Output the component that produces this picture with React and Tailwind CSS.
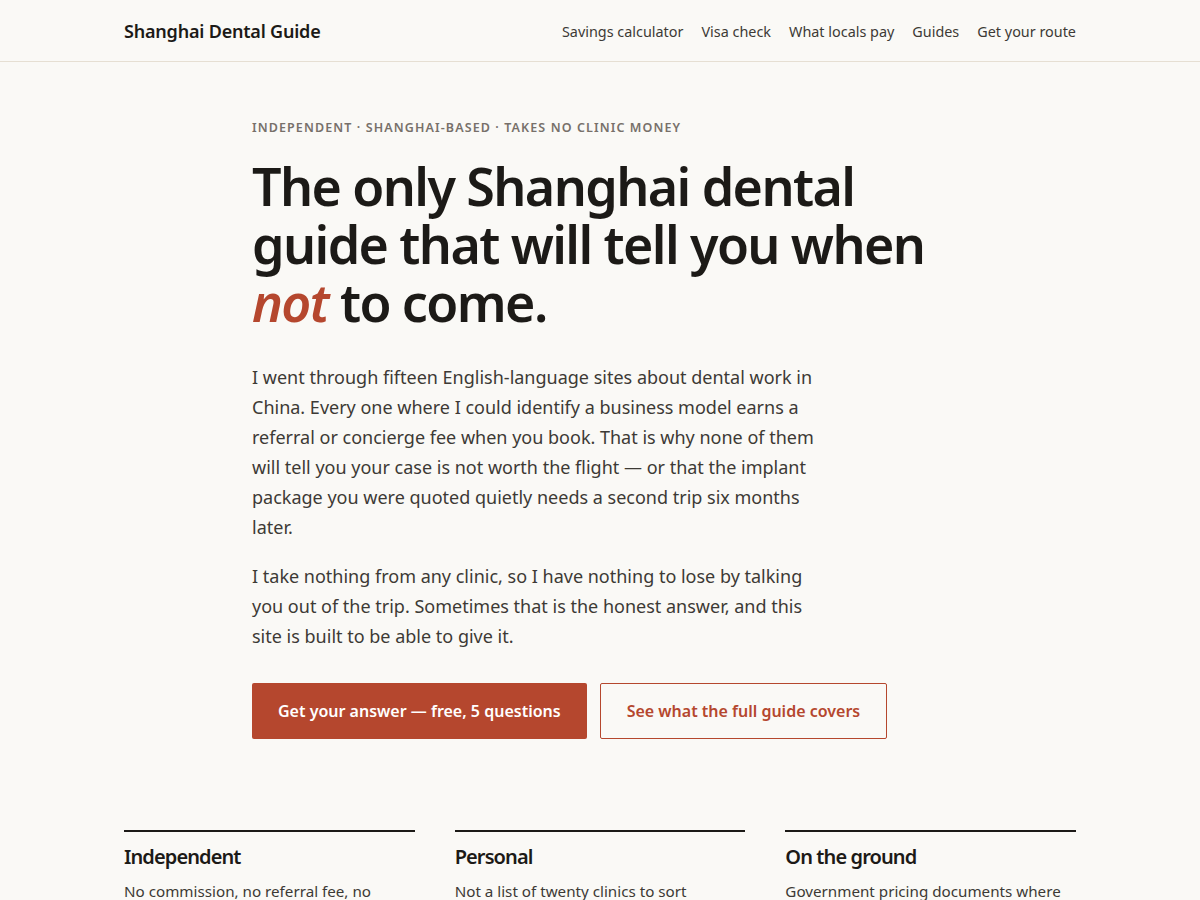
export default function App() {
  const font = { fontFamily: '"Noto Sans", "Open Sans", sans-serif' };
  return (
    <div className="min-h-[900px] bg-[#faf9f6] text-[#1c1a17]" style={font}>
      <header className="border-b border-[#e6dfd3]">
        <div className="mx-auto flex h-[61px] w-[952px] items-center justify-between pt-[2px]">
          <div className="text-[18px] font-semibold tracking-[-0.2px] text-[#1c1a17]">Shanghai Dental Guide</div>
          <nav className="flex items-center gap-[18px] text-[14.4px] text-[#3d3a35]">
            <a>Savings calculator</a>
            <a>Visa check</a>
            <a>What locals pay</a>
            <a>Guides</a>
            <a>Get your route</a>
          </nav>
        </div>
      </header>
      <main className="mx-auto w-[952px]">
        <section className="pl-[128px] pt-[57px]">
          <p className="text-[12.5px] font-semibold uppercase tracking-[1.1px] text-[#77706a]">
            Independent · Shanghai-based · Takes no clinic money
          </p>
          <h1 className="mt-[19px] max-w-[700px] text-[52px] font-semibold leading-[58px] tracking-[-1.6px] text-[#1c1a17]">
            The only Shanghai dental guide that will tell you when{" "}
            <em className="italic text-[#b5472e]">not</em> to come.
          </h1>
          <p className="mt-[31px] max-w-[570px] text-[18px] leading-[30px] text-[#3d3a35]">
            I went through fifteen English-language sites about dental work in China. Every one where I could identify a business model earns a referral or concierge fee when you book. That is why none of them will tell you your case is not worth the flight — or that the implant package you were quoted quietly needs a second trip six months later.
          </p>
          <p className="mt-[19px] max-w-[570px] text-[18px] leading-[30px] text-[#3d3a35]">
            I take nothing from any clinic, so I have nothing to lose by talking you out of the trip. Sometimes that is the honest answer, and this site is built to be able to give it.
          </p>
          <div className="mt-[32px] flex gap-[13px]">
            <button className="h-[56px] rounded-[2px] bg-[#b5472e] px-[26px] text-[16px] font-semibold text-white">
              Get your answer — free, 5 questions
            </button>
            <button className="h-[56px] rounded-[2px] border border-[#b5472e] bg-transparent px-[26px] text-[16px] font-semibold text-[#b5472e]">
              See what the full guide covers
            </button>
          </div>
        </section>
        <section className="mt-[91px] grid grid-cols-3 gap-[40px]">
          <div className="border-t-2 border-[#1c1a17] pt-[11px]">
            <h3 className="text-[20px] font-semibold leading-[28px] tracking-[-0.9px]">Independent</h3>
            <p className="mt-[7px] text-[15.2px] leading-[26px] text-[#3d3a35]">No commission, no referral fee, no affiliate deal with any clinic in Shanghai or anywhere else.</p>
          </div>
          <div className="border-t-2 border-[#1c1a17] pt-[11px]">
            <h3 className="text-[20px] font-semibold leading-[28px] tracking-[-0.9px]">Personal</h3>
            <p className="mt-[7px] text-[15.2px] leading-[26px] text-[#3d3a35]">Not a list of twenty clinics to sort through, but a route built around your case.</p>
          </div>
          <div className="border-t-2 border-[#1c1a17] pt-[11px]">
            <h3 className="text-[20px] font-semibold leading-[28px] tracking-[-0.9px]">On the ground</h3>
            <p className="mt-[7px] text-[15.2px] leading-[26px] text-[#3d3a35]">Government pricing documents where they exist, and prices checked in person.</p>
          </div>
        </section>
      </main>
    </div>
  );
}
